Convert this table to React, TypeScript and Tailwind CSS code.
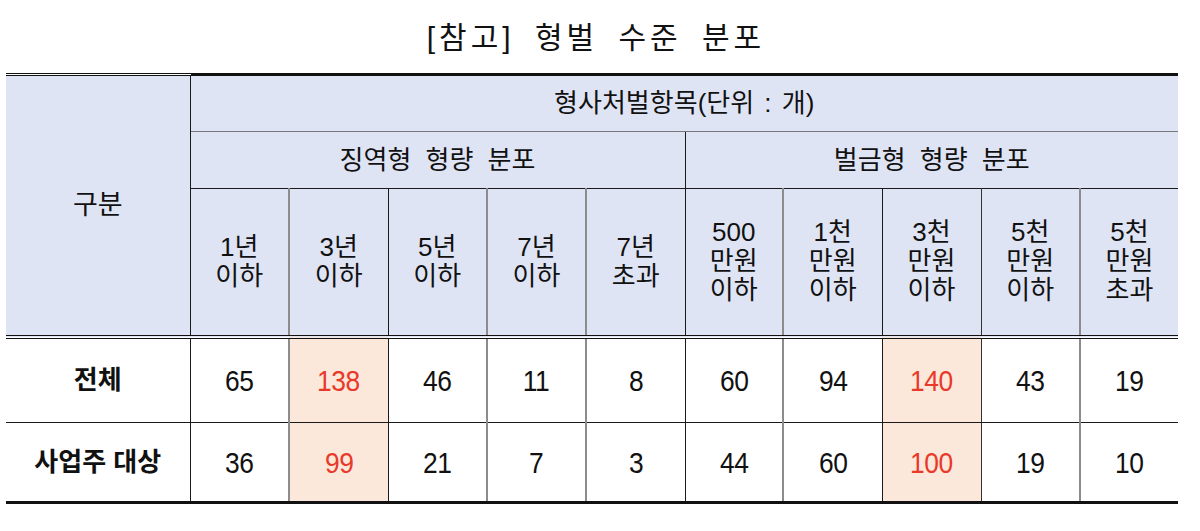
const FONT = "[font-family:'Liberation_Sans','Noto_Sans_CJK_KR',sans-serif]";

const COL_WIDTHS = ['w-[99px]', 'w-[99px]', 'w-[99px]', 'w-[99px]', 'w-[99px]', 'w-[98px]', 'w-[99px]', 'w-[99px]', 'w-[99px]', 'w-[98px]'];

// right edge of each column: gray inner lines, dark around groups and highlights
const RIGHT = [
  'border-r-2 border-r-[#8c8c8c]',
  'border-r border-r-[#1a1a1a]',
  'border-r-2 border-r-[#8c8c8c]',
  'border-r-2 border-r-[#8c8c8c]',
  'border-r border-r-[#1a1a1a]',
  'border-r-2 border-r-[#8c8c8c]',
  'border-r border-r-[#1a1a1a]',
  'border-r border-r-[#333]',
  'border-r-2 border-r-[#8c8c8c]',
  '',
];

const HEADERS = [
  ['1년', '이하'],
  ['3년', '이하'],
  ['5년', '이하'],
  ['7년', '이하'],
  ['7년', '초과'],
  ['500', '만원', '이하'],
  ['1천', '만원', '이하'],
  ['3천', '만원', '이하'],
  ['5천', '만원', '이하'],
  ['5천', '만원', '초과'],
];

const ROWS = [
  { label: '전체', values: [65, 138, 46, 11, 8, 60, 94, 140, 43, 19] },
  { label: '사업주 대상', values: [36, 99, 21, 7, 3, 44, 60, 100, 19, 10] },
];

const HIGHLIGHT = [1, 7];

export default function App() {
  return (
    <div className={`w-[1200px] h-[531px] bg-white text-[#111] ${FONT}`}>
      <div className="h-[73px] flex items-center justify-center">
        <h1 className="text-[30px] font-normal tracking-[4px] [word-spacing:8px] leading-none pt-[2px] pr-[8px]">
          [참고] 형벌 수준 분포
        </h1>
      </div>

      <table className="ml-[6px] w-[1172px] table-fixed border-collapse">
        <colgroup>
          <col className="w-[184px]" />
          {COL_WIDTHS.map((w, i) => (
            <col key={i} className={w} />
          ))}
        </colgroup>
        <thead className="bg-[#dfe4f4]">
          <tr>
            <th
              rowSpan={3}
              className="border-t-[3px] border-t-[#111] border-r border-r-[#1a1a1a] border-b-4 border-b-[#111] border-double text-[27px] font-normal"
            >
              구분
            </th>
            <th
              colSpan={10}
              className="h-[57px] border-t-[3px] border-t-[#111] border-b border-b-[#777] text-[26px] font-normal [word-spacing:3px]"
            >
              형사처벌항목(단위 : 개)
            </th>
          </tr>
          <tr>
            <th
              colSpan={5}
              className="h-[57px] border-r border-r-[#1a1a1a] border-b border-b-[#1a1a1a] text-[26px] font-normal [word-spacing:7px]"
            >
              징역형 형량 분포
            </th>
            <th
              colSpan={5}
              className="h-[57px] border-b border-b-[#1a1a1a] text-[26px] font-normal [word-spacing:7px]"
            >
              벌금형 형량 분포
            </th>
          </tr>
          <tr>
            {HEADERS.map((lines, i) => (
              <th
                key={i}
                className={`h-[148px] border-b-4 border-b-[#111] border-double font-normal text-[26px] leading-[29px] ${RIGHT[i]}`}
              >
                {lines.map((l) => (
                  <div key={l}>{l}</div>
                ))}
              </th>
            ))}
          </tr>
        </thead>
        <tbody>
          {ROWS.map((row, r) => {
            const last = r === ROWS.length - 1;
            const bottom = last
              ? 'border-b-[3px] border-b-[#111]'
              : 'border-b border-b-[#1a1a1a]';
            return (
              <tr key={row.label}>
                <td
                  className={`${last ? 'h-[80px]' : 'h-[86px]'} text-center text-[26px] font-bold border-r border-r-[#1a1a1a] ${bottom}`}
                >
                  {row.label}
                </td>
                {row.values.map((v, i) => {
                  const hot = HIGHLIGHT.includes(i);
                  return (
                    <td
                      key={i}
                      className={`text-center text-[30px] ${bottom} ${RIGHT[i]} ${
                        hot ? 'bg-[#fce8da] text-[#e8392a]' : ''
                      }`}
                    >
                      <span className="inline-block scale-x-[0.88] tracking-[-0.5px]">{v}</span>
                    </td>
                  );
                })}
              </tr>
            );
          })}
        </tbody>
      </table>
    </div>
  );
}
